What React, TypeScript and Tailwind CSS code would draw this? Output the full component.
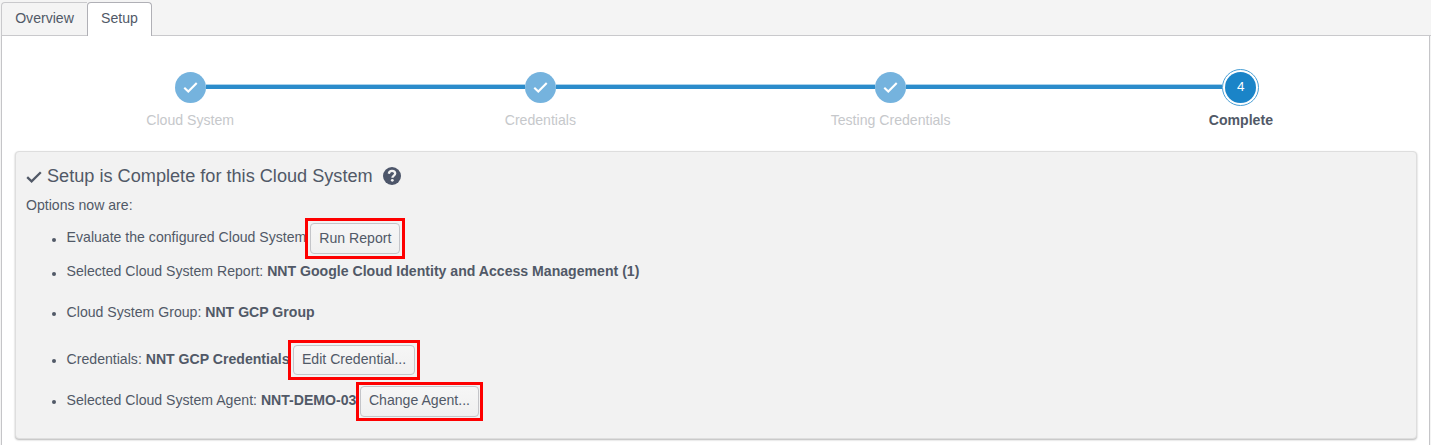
import React from "react";

const steps = ["Cloud System", "Credentials", "Testing Credentials", "Complete"];

function Check({ className }: { className: string }) {
  return (
    <svg viewBox="0 0 16 12" className={className} fill="none" stroke="currentColor" strokeWidth="2.3">
      <path d="M1.2 6.2 5.6 10.4 14.8 1.2" />
    </svg>
  );
}

function Step({ label, index }: { label: string; index: number }) {
  const current = index === steps.length - 1;
  return (
    <div className="flex flex-col items-center">
      <div className="flex h-[36px] w-full items-center">
        <div className={index === 0 ? "h-1 flex-1" : "mb-[2px] h-[5px] flex-1 border-t border-[#a9d2ec] bg-[#2b8ccb]"} />
        {current ? (
          <div className="flex size-[37px] shrink-0 items-center justify-center rounded-full border border-[#4a9fd5] bg-white">
            <div className="flex size-[31px] items-center justify-center rounded-full bg-[#1a84c8] text-[13.5px] text-white">4</div>
          </div>
        ) : (
          <div className="flex size-[31px] items-center justify-center rounded-full bg-[#75b3de] text-white">
            <Check className="h-[11px] w-[15px]" />
          </div>
        )}
        <div className={current ? "h-1 flex-1" : "mb-[2px] h-[5px] flex-1 border-t border-[#a9d2ec] bg-[#2b8ccb]"} />
      </div>
      <div className={current ? "mt-1.5 leading-[18px] font-bold" : "mt-1.5 leading-[18px] text-[#c6c8cb]"}>{label}</div>
    </div>
  );
}

function ActionButton({ children, box }: { children: React.ReactNode; box: string }) {
  return (
    <div className={"flex shrink-0 border-[3px] border-[#fe0000] " + box}>
      <button className="flex-1 rounded-[4px] border border-[#c4c5c9] bg-linear-to-b from-[#f6f6f6] to-[#f0f0f0] whitespace-nowrap">
        {children}
      </button>
    </div>
  );
}

function Row({ height, label, value, children }: { height: string; label: string; value?: string; children?: React.ReactNode }) {
  return (
    <li className={"flex items-center whitespace-pre " + height}>
      <span className="mt-[2px] mr-[10.6px] size-1 rounded-full bg-[#515967]" />
      <span className="pb-px">{label}</span>
      {value && <b className="pb-px">{value}</b>}
      {children}
    </li>
  );
}

export default function App() {
  return (
    <div className="flex h-[445px] w-[1431px] flex-col overflow-hidden bg-[#f4f4f4] font-['Liberation_Sans',Arial,sans-serif] text-[14.1px] text-[#515967]">
      <div className="flex h-[36px] shrink-0 items-end pl-px">
        <div className="flex h-[34px] w-[86px] items-center justify-center rounded-tl-[4px] border border-r-0 border-[#c9c9cc] bg-[#f4f4f4]">Overview</div>
        <div className="flex h-[34px] w-[65px] items-center justify-center rounded-t-[4px] border border-b-0 border-[#b0b0b6] bg-white pb-px">Setup</div>
        <div className="flex-1 border-b border-[#c9c9cc]" />
      </div>
      <div className="mr-px ml-px flex-1 border-x border-[#c5c5c8] bg-white pt-[33px] pr-3 pl-[13px]">
        <div className="mr-px grid grid-cols-4">
          {steps.map((s, i) => <Step key={s} label={s} index={i} />)}
        </div>
        <section className="mt-[22px] h-[288px] rounded-[4px] border border-[#dedede] bg-[#f2f2f2] pl-[10px] shadow-[0_1px_2px_#b8b8b8]">
          <h1 className="flex h-[48px] items-center text-[18.15px]">
            <Check className="mt-0.5 mr-[5px] h-[12px] w-[16px]" />
            <span className="pt-[2px]">Setup is Complete for this Cloud System</span>
            <svg viewBox="0 0 18 18" className="ml-[10px] size-[18px]">
              <circle cx="9" cy="9" r="9" fill="#4d566a" />
              <path d="M5.8 6.7C6.2 4.6 7.4 3.9 9 3.9c1.9 0 3.2 1 3.2 2.7 0 2-2.8 2-2.8 4.1" fill="none" stroke="#f2f2f2" strokeWidth="2.3" />
              <circle cx="9.3" cy="13.3" r="1.4" fill="#f2f2f2" />
            </svg>
          </h1>
          <p className="h-[18px] leading-[10px]">Options now are:</p>
          <ul className="pl-[26px]">
            <Row height="h-[41px]" label="Evaluate the configured Cloud System">
              <ActionButton box="-ml-px h-[41px] w-[100px] p-[2px]">Run Report</ActionButton>
            </Row>
            <Row height="h-[27px]" label="Selected Cloud System Report: " value="NNT Google Cloud Identity and Access Management (1)" />
            <Row height="h-[54px]" label="Cloud System Group: " value="NNT GCP Group" />
            <Row height="h-[40px]" label="Credentials: " value="NNT GCP Credentials">
              <ActionButton box="-ml-[1.5px] h-[40px] w-[132px] p-[2px]">Edit Credential...</ActionButton>
            </Row>
            <Row height="mt-px h-[40px]" label="Selected Cloud System Agent: " value="NNT-DEMO-03">
              <ActionButton box="-ml-[0.5px] h-[39px] w-[127px] p-px">Change Agent...</ActionButton>
            </Row>
          </ul>
        </section>
      </div>
    </div>
  );
}
